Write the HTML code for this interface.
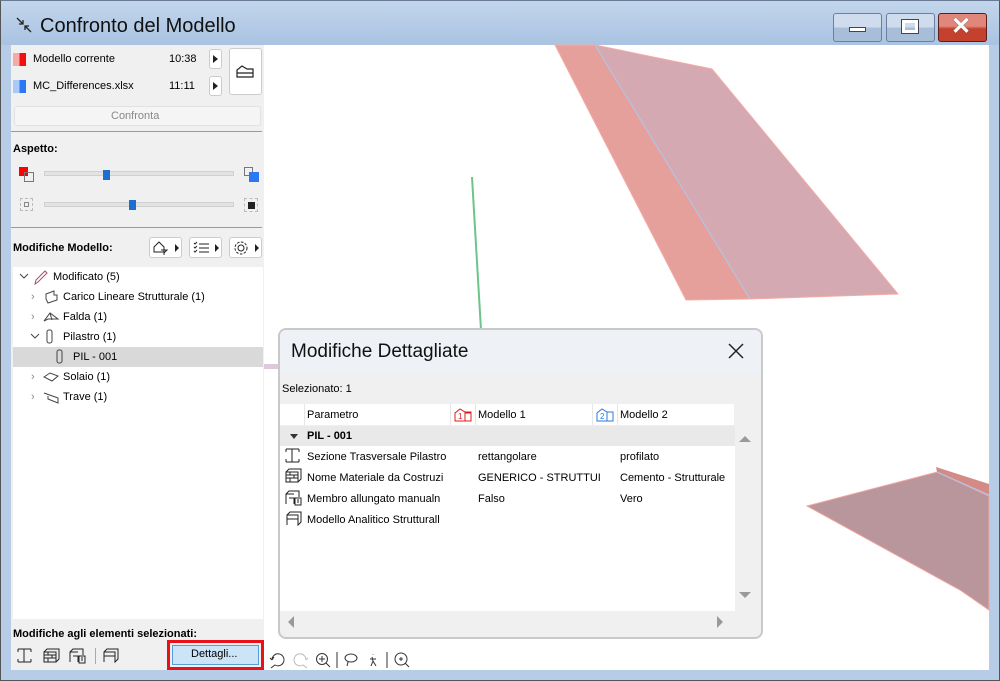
<!DOCTYPE html>
<html><head><meta charset="utf-8"><style>
*{margin:0;padding:0;box-sizing:border-box}
body{width:1000px;height:681px;overflow:hidden;background:#b7cde7;font-family:"Liberation Sans",sans-serif;font-size:11px;color:#000;position:relative}
.a{position:absolute}
.t{position:absolute;white-space:nowrap}
svg{position:absolute;overflow:visible}
.btn{position:absolute;top:237px;width:33px;height:21px;background:#fff;border:1px solid #ccc;border-radius:3px}
.arr{position:absolute;top:6px;left:25px;border-left:4px solid #222;border-top:4px solid transparent;border-bottom:4px solid transparent}
</style></head><body>
<!-- window frame -->
<div class="a" style="left:0;top:0;width:1000px;height:45px;background:linear-gradient(#c3d6ec,#a9c3e1)"></div>
<div class="a" style="left:0;top:0;width:1000px;height:681px;border:1px solid #555;border-top-color:#6a7c95;pointer-events:none"></div>
<div class="t" style="left:40px;top:15px;font-size:20px;color:#111">Confronto del Modello</div>
<svg style="left:16px;top:17px" width="16" height="16"><path d="M1 1L7 7M7 3V7H3M15 15L9 9M9 13V9H13" stroke="#222" stroke-width="1.3" fill="none"/></svg>
<!-- caption buttons -->
<div class="a" style="left:833px;top:13px;width:49px;height:29px;border:1px solid #6d7f9a;border-radius:3px;background:linear-gradient(#cfdcee 50%,#a7bdd8 50%)"></div>
<div class="a" style="left:849px;top:27px;width:17px;height:5px;background:#fff;border:1px solid #445"></div>
<div class="a" style="left:886px;top:13px;width:49px;height:29px;border:1px solid #6d7f9a;border-radius:3px;background:linear-gradient(#cfdcee 50%,#a7bdd8 50%)"></div>
<div class="a" style="left:902px;top:20px;width:16px;height:13px;border:3px solid #fff;outline:1px solid #445"></div>
<div class="a" style="left:938px;top:13px;width:49px;height:29px;border:1px solid #5a1f1a;border-radius:3px;background:linear-gradient(#e0867a 45%,#c3412d 55%)"></div>
<div class="t" style="left:951px;top:12px;font-size:24px;color:#fff;font-weight:bold;text-shadow:0 0 1px #444">✕</div>

<!-- client -->
<div class="a" style="left:11px;top:45px;width:978px;height:625px;background:#fff"></div>
<!-- left panel -->
<div class="a" style="left:11px;top:45px;width:253px;height:625px;background:#f0f0f0"></div>
<div class="a" style="left:13px;top:53px;width:13px;height:13px;background:linear-gradient(90deg,#f7a9a5 50%,#f01010 50%)"></div>
<div class="t" style="left:33px;top:53px">Modello corrente</div>
<div class="t" style="left:169px;top:53px">10:38</div>
<div class="a" style="left:209px;top:49px;width:13px;height:20px;background:#fff;border:1px solid #ccc;border-radius:3px"></div>
<div class="a" style="left:213px;top:55px;border-left:5px solid #222;border-top:4px solid transparent;border-bottom:4px solid transparent"></div>
<div class="a" style="left:13px;top:80px;width:13px;height:13px;background:linear-gradient(90deg,#aac8f8 50%,#2b78f2 50%)"></div>
<div class="t" style="left:33px;top:80px">MC_Differences.xlsx</div>
<div class="t" style="left:169px;top:80px">11:11</div>
<div class="a" style="left:209px;top:76px;width:13px;height:20px;background:#fff;border:1px solid #ccc;border-radius:3px"></div>
<div class="a" style="left:213px;top:82px;border-left:5px solid #222;border-top:4px solid transparent;border-bottom:4px solid transparent"></div>
<div class="a" style="left:229px;top:48px;width:33px;height:47px;background:#fff;border:1px solid #ccc;border-radius:3px"></div>
<svg style="left:236px;top:64px" width="18" height="14"><path d="M1 13V6L6 2L11 5H17V13ZM1 9H17" stroke="#222" stroke-width="1.2" fill="none"/></svg>
<div class="a" style="left:14px;top:106px;width:247px;height:20px;background:#f5f5f5;border:1px solid #e2e2e2;border-radius:3px"></div>
<div class="t" style="left:111px;top:110px;color:#888">Confronta</div>
<div class="a" style="left:11px;top:131px;width:251px;height:1px;background:#999"></div>
<div class="t" style="left:13px;top:143px;font-weight:bold">Aspetto:</div>
<div class="a" style="left:19px;top:167px;width:9px;height:9px;background:#f00"></div>
<div class="a" style="left:24px;top:172px;width:10px;height:10px;border:1px solid #777"></div>
<div class="a" style="left:44px;top:171px;width:190px;height:5px;background:#e3e3e3;border:1px solid #d0d0d0"></div>
<div class="a" style="left:103px;top:170px;width:7px;height:10px;background:#1b6fd0"></div>
<div class="a" style="left:244px;top:167px;width:9px;height:9px;border:1px solid #777"></div>
<div class="a" style="left:249px;top:172px;width:10px;height:10px;background:#2b78f2"></div>
<div class="a" style="left:20px;top:198px;width:13px;height:13px;border:1px dashed #bbb"></div>
<div class="a" style="left:24px;top:202px;width:5px;height:5px;border:1px solid #888"></div>
<div class="a" style="left:44px;top:202px;width:190px;height:5px;background:#e3e3e3;border:1px solid #d0d0d0"></div>
<div class="a" style="left:129px;top:200px;width:7px;height:10px;background:#1b6fd0"></div>
<div class="a" style="left:244px;top:198px;width:14px;height:14px;border:1px dashed #bbb"></div>
<div class="a" style="left:248px;top:202px;width:7px;height:7px;background:#222"></div>
<div class="a" style="left:11px;top:227px;width:251px;height:1px;background:#999"></div>
<div class="t" style="left:13px;top:242px;font-weight:bold">Modifiche Modello:</div>
<div class="btn" style="left:149px"><svg style="left:2px;top:2px" width="20" height="16"><path d="M2 12V7L7 2L12 7V12ZM9 10H15L12 13V15" stroke="#222" fill="none"/></svg><div class="arr"></div></div>
<div class="btn" style="left:189px"><svg style="left:2px;top:2px" width="20" height="16"><path d="M7 4H17M7 8H17M7 12H17M2 3L3 4L5 2M2 7L3 8L5 6M2 11L3 12L5 10" stroke="#222" fill="none"/></svg><div class="arr"></div></div>
<div class="btn" style="left:229px"><svg style="left:2px;top:2px" width="20" height="16"><circle cx="9" cy="8" r="3" stroke="#222" fill="none"/><circle cx="9" cy="8" r="6" stroke="#222" stroke-dasharray="2.5 1.5" fill="none"/></svg><div class="arr"></div></div>
<!-- tree -->
<div class="a" style="left:13px;top:267px;width:250px;height:352px;background:#fff"></div>
<div class="a" style="left:13px;top:347px;width:250px;height:20px;background:#d9d9d9"></div>
<svg style="left:19px;top:273px" width="10" height="8"><path d="M1 1L5 5L9 1" stroke="#444" fill="none"/></svg>
<svg style="left:33px;top:269px" width="16" height="16"><path d="M2 15L3 11L12 2L14 4L5 13Z" stroke="#a05070" fill="none"/></svg>
<div class="t" style="left:53px;top:271px">Modificato (5)</div>
<div class="t" style="left:31px;top:291px;color:#888">›</div>
<svg style="left:43px;top:289px" width="16" height="16"><path d="M3 5L11 2V6H14V11L5 14L3 10Z" stroke="#444" fill="none"/></svg>
<div class="t" style="left:63px;top:291px">Carico Lineare Strutturale (1)</div>
<div class="t" style="left:31px;top:311px;color:#888">›</div>
<svg style="left:43px;top:309px" width="16" height="16"><path d="M1 12L7 4L15 10H5ZM7 4L9 11" stroke="#444" fill="none"/></svg>
<div class="t" style="left:63px;top:311px">Falda (1)</div>
<svg style="left:30px;top:333px" width="10" height="8"><path d="M1 1L5 5L9 1" stroke="#444" fill="none"/></svg>
<svg style="left:45px;top:329px" width="10" height="16"><rect x="2" y="1" width="5" height="13" rx="2" stroke="#444" fill="none"/></svg>
<div class="t" style="left:63px;top:331px">Pilastro (1)</div>
<svg style="left:55px;top:349px" width="10" height="16"><rect x="2" y="1" width="5" height="13" rx="2" stroke="#444" fill="none"/></svg>
<div class="t" style="left:73px;top:351px">PIL - 001</div>
<div class="t" style="left:31px;top:371px;color:#888">›</div>
<svg style="left:43px;top:369px" width="16" height="16"><path d="M1 8L7 4L15 7L9 12Z" stroke="#444" fill="none"/></svg>
<div class="t" style="left:63px;top:371px">Solaio (1)</div>
<div class="t" style="left:31px;top:391px;color:#888">›</div>
<svg style="left:43px;top:389px" width="16" height="16"><path d="M1 4L15 9V14L5 10V7" stroke="#444" fill="none"/></svg>
<div class="t" style="left:63px;top:391px">Trave (1)</div>
<div class="t" style="left:13px;top:628px;font-weight:bold">Modifiche agli elementi selezionati:</div>
<svg style="left:17px;top:648px" width="16" height="16"><path d="M1 1H14M1 14H14M7 1V14M1 1V4M14 1V4M1 14V11M14 14V11" stroke="#222" fill="none"/></svg>
<svg style="left:43px;top:648px" width="18" height="16"><path d="M1 4H13V14H1ZM1 7H13M1 10H13M5 4V7M9 7V10M5 10V14M1 4L4 1H16V11L13 14" stroke="#222" fill="none"/></svg>
<svg style="left:69px;top:648px" width="18" height="16"><path d="M1 14V4L4 1H14V7M1 4H9M4 8H9V14M10 8H16V15H10ZM12 10H14M12 12H14" stroke="#222" fill="none"/></svg>
<div class="a" style="left:95px;top:648px;width:1px;height:16px;background:#aaa"></div>
<svg style="left:103px;top:648px" width="16" height="16"><path d="M1 14V4L4 1H15V11L12 14V4H1M1 8H12" stroke="#222" fill="none"/></svg>
<div class="a" style="left:167px;top:640px;width:97px;height:30px;border:3px solid #e8101a"></div>
<div class="a" style="left:172px;top:645px;width:87px;height:20px;background:#cce4f7;border:1px solid #5a9bd8"></div>
<div class="t" style="left:191px;top:648px">Dettagli...</div>

<!-- viewport shapes -->
<svg style="left:0;top:0" width="1000" height="681">
<polygon points="555,45 595,45 750,299 686,300" fill="#e6a09b" stroke="#f5aaa5"/>
<polygon points="595,45 712,69 898,294 750,299" fill="#d4a9b1" stroke="#f5aaa5"/>
<line x1="595" y1="45" x2="750" y2="299" stroke="#a9c7ef"/>
<polygon points="936,467 989,484 989,496 937,472" fill="#d48a85"/>
<polygon points="807,506 937,472 989,496 989,610 960,590" fill="#b9969c" stroke="#f5a5a0"/>
<line x1="937" y1="472" x2="989" y2="495" stroke="#a9c7ef"/>
<line x1="472" y1="177" x2="481" y2="330" stroke="#6cc48a" stroke-width="2"/>
<rect x="264" y="364" width="16" height="5" fill="#e0c8dc"/>
<circle cx="495" cy="637" r="2" fill="#1a1"/>
</svg>
<!-- view toolbar -->
<svg style="left:268px;top:651px" width="150" height="18"><path d="M4 9A6 6 0 1 1 7 14L3 17M4 9L2 7M4 9L6 6" stroke="#333" fill="none"/><path d="M38 9A6 6 0 1 0 35 14L39 17M38 9L40 7" stroke="#bbb" fill="none"/><circle cx="54" cy="8" r="5.5" stroke="#333" fill="none"/><path d="M58 12L62 16M51 8H57M54 5V11M69 1V17" stroke="#333" fill="none"/><ellipse cx="83" cy="7" rx="6" ry="4" stroke="#333" fill="none"/><path d="M80 11L79 15M105 3V3.5M104 6L105 10L103 15M105 10L108 15M102 8H108M119 1V17" stroke="#333" fill="none"/><circle cx="133" cy="8" r="6" stroke="#333" fill="none"/><path d="M137 12L141 16M131 8H135M133 6V10" stroke="#333" fill="none"/></svg>

<!-- dialog -->
<div class="a" style="left:278px;top:328px;width:485px;height:311px;border:2px solid #c9c9c9;border-radius:8px;background:#f0f0f0;overflow:hidden">
 <div class="a" style="left:0;top:0;width:481px;height:43px;background:#eef2f7"></div>
 <div class="t" style="left:11px;top:11px;font-size:19px;color:#111">Modifiche Dettagliate</div>
 <svg style="left:448px;top:13px" width="16" height="16"><path d="M1 1L15 15M15 1L1 15" stroke="#222" stroke-width="1.5"/></svg>
 <div class="t" style="left:2px;top:53px">Selezionato: 1</div>
 <div class="a" style="left:0;top:74px;width:454px;height:21px;background:#fff"></div>
 <div class="a" style="left:24px;top:74px;width:1px;height:21px;background:#e6e6e6"></div>
 <div class="a" style="left:170px;top:74px;width:1px;height:21px;background:#e6e6e6"></div>
 <div class="a" style="left:195px;top:74px;width:1px;height:21px;background:#e6e6e6"></div>
 <div class="a" style="left:312px;top:74px;width:1px;height:21px;background:#e6e6e6"></div>
 <div class="a" style="left:337px;top:74px;width:1px;height:21px;background:#e6e6e6"></div>
 <div class="t" style="left:27px;top:79px">Parametro</div>
 <svg style="left:174px;top:78px" width="18" height="14"><path d="M1 13V5L6 1L11 4H17V13ZM11 4V13M11 5L17 5" stroke="#e01818" fill="none"/><text x="4" y="11" font-size="8" fill="#e01818" font-family="Liberation Sans">1</text></svg>
 <div class="t" style="left:198px;top:79px">Modello 1</div>
 <svg style="left:316px;top:78px" width="18" height="14"><path d="M1 13V5L6 1L11 4H17V13ZM11 4V13" stroke="#2b78e0" fill="none"/><text x="4" y="11" font-size="8" fill="#2b78e0" font-family="Liberation Sans">2</text></svg>
 <div class="t" style="left:340px;top:79px">Modello 2</div>
 <div class="a" style="left:0;top:96px;width:455px;height:20px;background:#e9e9e9"></div>
 <div class="a" style="left:10px;top:104px;border-top:5px solid #333;border-left:4px solid transparent;border-right:4px solid transparent"></div>
 <div class="t" style="left:27px;top:100px;font-weight:bold">PIL - 001</div>
 <div class="a" style="left:0;top:116px;width:455px;height:165px;background:#fff"></div>
 <svg style="left:5px;top:118px" width="18" height="80"><path d="M1 1H14M1 14H14M7 1V14M1 1V4M14 1V4M1 14V11M14 14V11" stroke="#222" fill="none"/><path d="M1 24H13V34H1ZM1 27H13M1 30H13M5 24V27M9 27V30M5 30V34M1 24L4 21H16V31L13 34" stroke="#222" fill="none"/><path d="M1 56V46L4 43H14V49M1 46H9M4 50H9V56M10 50H16V57H10ZM12 52H14M12 54H14" stroke="#222" fill="none"/><path d="M2 77V67L5 64H16V74L13 77V67H2M2 71H13" stroke="#222" fill="none"/></svg>
 <div class="t" style="left:27px;top:121px">Sezione Trasversale Pilastro</div>
 <div class="t" style="left:198px;top:121px">rettangolare</div>
 <div class="t" style="left:340px;top:121px">profilato</div>
 <div class="t" style="left:27px;top:142px">Nome Materiale da Costruzi</div>
 <div class="t" style="left:198px;top:142px">GENERICO - STRUTTUI</div>
 <div class="t" style="left:340px;top:142px">Cemento - Strutturale</div>
 <div class="t" style="left:27px;top:163px">Membro allungato manualn</div>
 <div class="t" style="left:198px;top:163px">Falso</div>
 <div class="t" style="left:340px;top:163px">Vero</div>
 <div class="t" style="left:27px;top:184px">Modello Analitico Strutturall</div>
 <div class="a" style="left:459px;top:106px;border-bottom:6px solid #999;border-left:6px solid transparent;border-right:6px solid transparent"></div>
 <div class="a" style="left:459px;top:262px;border-top:6px solid #999;border-left:6px solid transparent;border-right:6px solid transparent"></div>
 <div class="a" style="left:8px;top:286px;border-right:6px solid #999;border-top:6px solid transparent;border-bottom:6px solid transparent"></div>
 <div class="a" style="left:437px;top:286px;border-left:6px solid #999;border-top:6px solid transparent;border-bottom:6px solid transparent"></div>
</div>
</body></html>
